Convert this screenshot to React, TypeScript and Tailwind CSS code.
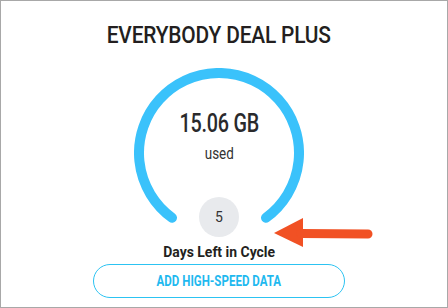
import React from "react";

const font = { fontFamily: 'Roboto, "Noto Sans", sans-serif' };

const UsageRing = () => (
  <svg width="170" height="170" viewBox="0 0 170 170" className="absolute inset-0">
    <path
      d="M38 149.7 A80 80 0 1 1 132 149.7"
      fill="none"
      stroke="#3ac2fb"
      strokeWidth="10"
      strokeLinecap="round"
    />
  </svg>
);

const PointerArrow = () => (
  <svg width="104" height="34" viewBox="0 0 104 34" className="absolute left-[270px] top-[215px]">
    <path d="M3 17 L32 2 L32 31 Z" fill="#f15124" />
    <path d="M30 17.5 L97 18" stroke="#f15124" strokeWidth="9" strokeLinecap="round" />
  </svg>
);

export default function App() {
  return (
    <div
      className="relative w-[448px] h-[308px] border border-[#a8a8a8] bg-white flex flex-col items-center overflow-hidden pr-[10px]"
      style={font}
    >
      <h1 className="mt-[20px] text-[24px] leading-[28px] font-medium text-[#231f20] tracking-[-0.2px] whitespace-nowrap scale-x-[0.87]">
        EVERYBODY DEAL PLUS
      </h1>

      <div className="relative mt-[19px] w-[170px] h-[170px] flex flex-col items-center">
        <UsageRing />
        <div className="mt-[42px] text-[25px] leading-[28px] font-medium text-[#2a2a2c] tracking-[-0.3px] whitespace-nowrap scale-x-[0.79]">
          15.06 GB
        </div>
        <div className="mt-[6px] text-[16px] leading-[20px] text-[#333] scale-x-[0.84]">used</div>
        <div className="mt-auto mb-[1px] w-10 h-10 rounded-full bg-[#e8eaed] flex items-center justify-center text-[14px] text-[#333]">
          5
        </div>
      </div>

      <div className="mt-[7px] text-[15px] leading-[15px] font-bold text-[#231f20] whitespace-nowrap scale-x-[0.93]">
        Days Left in Cycle
      </div>

      <button className="mt-[4px] w-[252px] h-[34px] rounded-full border-[1.5px] border-[#2cc3f2] flex items-center justify-center">
        <span className="text-[#1fb9ef] text-[15px] font-bold whitespace-nowrap scale-x-[0.77]">ADD HIGH-SPEED DATA</span>
      </button>

      <PointerArrow />
    </div>
  );
}
